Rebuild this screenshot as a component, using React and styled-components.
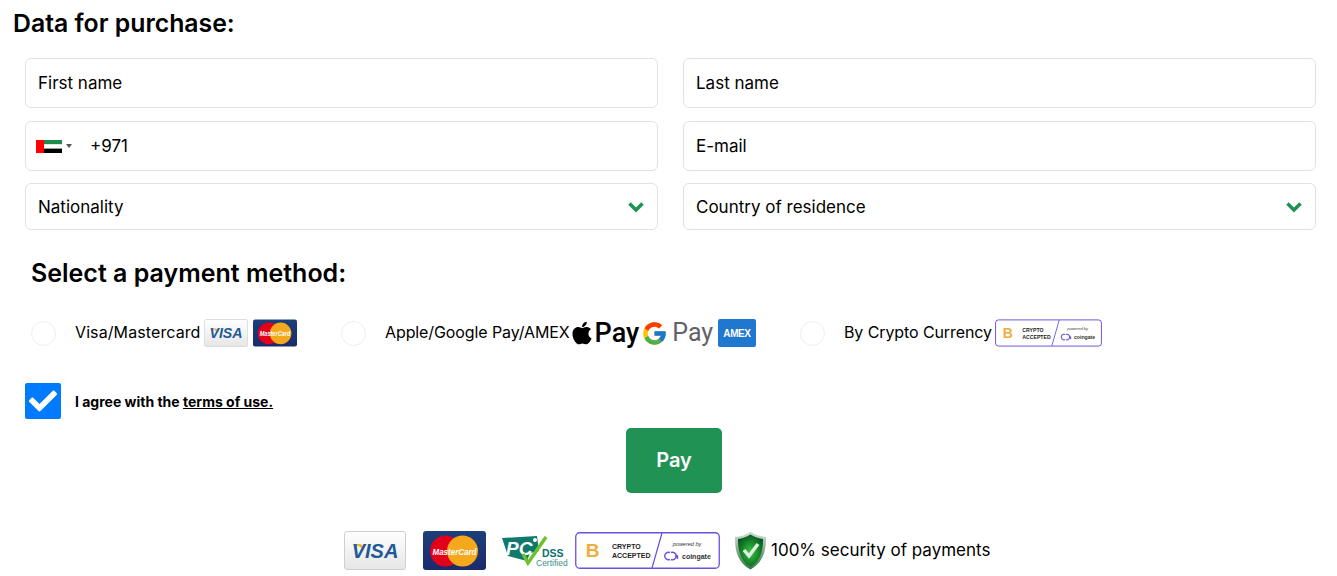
import styled, { createGlobalStyle } from 'styled-components'
import { FaApple, FaCheck } from 'react-icons/fa'
import { FcGoogle } from 'react-icons/fc'

const GlobalStyle = createGlobalStyle`
  html, body {
    margin: 0;
    padding: 0;
    background: #fff;
    color: #000;
    font-family: Inter, "Noto Sans", sans-serif;
  }
`

const Flag = () => (
  <svg width="26" height="13" viewBox="0 0 26 13">
    <rect width="26" height="4.4" fill="#1f8a4c" />
    <rect y="4.4" width="26" height="4.2" fill="#fff" />
    <rect y="8.6" width="26" height="4.4" fill="#000" />
    <rect width="8" height="13" fill="#f00" />
  </svg>
)

const Chevron = () => (
  <svg width="18" height="12" viewBox="0 0 18 12">
    <path d="M2.5 2.5 9 9l6.500-6.500" fill="none" stroke="#1f9254" strokeWidth="3.600" />
  </svg>
)

const VisaCard = ({ width, height }) => (
  <svg width={width} height={height} viewBox="0 0 62 39">
    <defs>
      <linearGradient id={`visa${width}`} x1="0" y1="0" x2="0" y2="1">
        <stop offset="0" stopColor="#fff" />
        <stop offset="1" stopColor="#e6e6e6" />
      </linearGradient>
    </defs>
    <rect x="0.5" y="0.5" width="61" height="38" rx="2.500" fill={`url(#visa${width})`} stroke="#cfcfcf" />
    <path d="M8 13h8c2 0 3 2 4 6-3-3-7-5-12-6z" fill="#f0b030" />
    <text x="31" y="27" textAnchor="middle" fontFamily="Liberation Sans" fontWeight="700" fontStyle="italic" fontSize="20" fill="#1f5a94">VISA</text>
  </svg>
)

const MasterCard = ({ width, height }) => (
  <svg width={width} height={height} viewBox="0 0 63 39">
    <defs>
      <linearGradient id={`mc${width}`} x1="0" y1="0" x2="0" y2="1">
        <stop offset="0" stopColor="#1c4079" />
        <stop offset="1" stopColor="#1b2a6c" />
      </linearGradient>
    </defs>
    <rect width="63" height="39" rx="3" fill={`url(#mc${width})`} />
    <circle cx="22.500" cy="20" r="15.500" fill="#e2001a" />
    <circle cx="39.500" cy="20" r="15.500" fill="#f5a81c" />
    <text x="31.500" y="23.500" textAnchor="middle" fontFamily="Liberation Sans" fontWeight="700" fontStyle="italic" fontSize="9.500" textLength="44" lengthAdjust="spacingAndGlyphs" fill="#fff">MasterCard</text>
  </svg>
)

const AmexCard = () => (
  <svg width="38" height="28" viewBox="0 0 38 28">
    <rect width="38" height="28" rx="2" fill="#1f77d0" />
    <text x="19" y="17.500" textAnchor="middle" fontFamily="Liberation Sans" fontWeight="700" fontSize="10" letterSpacing="-0.400" fill="#fff">AMEX</text>
  </svg>
)

const CryptoBadge = ({ width, height }) => (
  <svg width={width} height={height} viewBox="0 0 145 37">
    <rect x="0.750" y="0.750" width="143.500" height="35.500" rx="4" fill="#fff" stroke="#6a4fe0" strokeWidth="1.300" />
    <path d="M87 1 77 36" stroke="#6a4fe0" strokeWidth="1.200" />
    <text x="17.500" y="25" textAnchor="middle" fontFamily="Liberation Sans" fontWeight="700" fontSize="19" fill="#f0ad3c">B</text>
    <text x="37" y="17" fontFamily="Liberation Sans" fontWeight="700" fontSize="7" fill="#222">CRYPTO</text>
    <text x="37" y="26" fontFamily="Liberation Sans" fontWeight="700" fontSize="7" fill="#222">ACCEPTED</text>
    <text x="112" y="14" textAnchor="middle" fontFamily="Liberation Sans" fontStyle="italic" fontSize="5.500" fill="#333">powered by</text>
    <path d="M95 20.500a3.800 3.800 0 1 0 0 7M96 27.500a3.800 3.800 0 1 0 0-7M100 24h2.500v3" fill="none" stroke="#6a4fe0" strokeWidth="1.400" />
    <text x="107" y="26.500" fontFamily="Liberation Sans" fontWeight="700" fontSize="7" fill="#333">coingate</text>
  </svg>
)

const PciLogo = () => (
  <svg width="70" height="39" viewBox="0 0 70 39">
    <path d="M0 7 35 5l2 15-9 2-3 8L6 25z" fill="#0f7a6c" />
    <text x="4" y="24" fontFamily="Liberation Sans" fontWeight="700" fontStyle="italic" fontSize="19" fill="#fff">PC</text>
    <circle cx="33" cy="9" r="2" fill="#fff" />
    <path d="M21 23l5 9L44 6" fill="none" stroke="#6cc12c" strokeWidth="3.500" />
    <text x="40" y="26" fontFamily="Liberation Sans" fontWeight="700" fontSize="10.500" fill="#0f6f6a">DSS</text>
    <text x="34" y="35" fontFamily="Liberation Sans" fontSize="8.500" fill="#3a8f8a">Certified</text>
  </svg>
)

const Shield = () => (
  <svg width="33" height="39" viewBox="0 0 33 39">
    <defs>
      <linearGradient id="shieldRim" x1="0" y1="0" x2="0" y2="1">
        <stop offset="0" stopColor="#d5dfd6" />
        <stop offset="1" stopColor="#2f7a41" />
      </linearGradient>
      <radialGradient id="shieldFill" cx="0.500" cy="0.550" r="0.600">
        <stop offset="0" stopColor="#35c53f" />
        <stop offset="1" stopColor="#04521c" />
      </radialGradient>
    </defs>
    <path d="M16.500 0.500C21 4 26 5.500 32 6c0 13-2 25-15.500 32.500C3 31 1 19 1 6 7 5.500 12 4 16.500 0.500z" fill="url(#shieldRim)" />
    <path d="M16.500 3.500C20.500 6 25 7.500 29 8c0 11-2 22-12.500 27.500C6 30 4 19 4 8c4-.5 8.500-2 12.500-4.500z" fill="url(#shieldFill)" />
    <path d="M10 19l5 6 9-12" fill="none" stroke="#dfeee0" strokeWidth="3.500" />
  </svg>
)

const App = () => (
  <Page>
    <GlobalStyle />
    <Title>Data for purchase:</Title>
    <FieldRow $gap={13}>
      <Field>First name</Field>
      <Field>Last name</Field>
    </FieldRow>
    <FieldRow $gap={12}>
      <Field>
        <FlagPicker>
          <Flag />
          <Caret />
        </FlagPicker>
        +971
      </Field>
      <Field>E-mail</Field>
    </FieldRow>
    <FieldRow $gap={0}>
      <SelectField>
        Nationality
        <Chevron />
      </SelectField>
      <SelectField>
        Country of residence
        <Chevron />
      </SelectField>
    </FieldRow>

    <SubTitle>Select a payment method:</SubTitle>
    <Methods>
      <Method $width={310}>
        <Radio />
        <MethodLabel $spacing={0.1}>Visa/Mastercard</MethodLabel>
        <Logos $left={3}>
          <VisaCard width={44} height={28} />
          <MasterCard width={44} height={28} />
        </Logos>
      </Method>
      <Method $width={459}>
        <Radio />
        <MethodLabel $spacing={-0.1}>Apple/Google Pay/AMEX</MethodLabel>
        <Logos $left={2}>
          <PayMark $gap={3}>
            <FaApple size={26} color="#000" />
            <PayText>Pay</PayText>
          </PayMark>
          <PayMark $gap={7}>
            <FcGoogle size={27} />
            <PayText $grey>Pay</PayText>
          </PayMark>
          <AmexCard />
        </Logos>
      </Method>
      <Method>
        <Radio />
        <MethodLabel $spacing={-0.1}>By Crypto Currency</MethodLabel>
        <Logos $left={3}>
          <CryptoBadge width={107} height={28} />
        </Logos>
      </Method>
    </Methods>

    <Agree>
      <CheckBox>
        <FaCheck size={28} color="#fff" />
      </CheckBox>
      <AgreeText>
        I agree with the <TermsLink>terms of use.</TermsLink>
      </AgreeText>
    </Agree>

    <PayRow>
      <PayButton>Pay</PayButton>
    </PayRow>

    <Footer>
      <VisaCard width={62} height={39} />
      <FooterLogo $left={17}>
        <MasterCard width={63} height={39} />
      </FooterLogo>
      <FooterLogo $left={16}>
        <PciLogo />
      </FooterLogo>
      <FooterLogo $left={3}>
        <CryptoBadge width={145} height={37} />
      </FooterLogo>
      <Security>
        <Shield />
        <SecurityText>100% security of payments</SecurityText>
      </Security>
    </Footer>
  </Page>
)

const Page = styled.div`
  width: 1337px;
  height: 576px;
  overflow: hidden;
`

const Title = styled.h2`
  margin: 0;
  padding: 8px 0 0 13px;
  height: 58px;
  box-sizing: border-box;
  font-size: 24.8px;
  line-height: 30px;
  font-weight: 600;
`

const FieldRow = styled.div`
  display: grid;
  grid-template-columns: 633px 633px;
  column-gap: 25px;
  padding-left: 25px;
  margin-bottom: ${props => props.$gap}px;
`

const Field = styled.div`
  display: flex;
  align-items: center;
  box-sizing: border-box;
  height: 50px;
  padding: 0 12px;
  border: 1px solid #e2e2e2;
  border-radius: 6px;
  font-size: 17px;
`

const SelectField = styled(Field)`
  height: 47px;
  justify-content: space-between;
`

const FlagPicker = styled.div`
  display: flex;
  align-items: center;
  width: 54px;
  margin-left: -2px;
`

const Caret = styled.span`
  margin-left: 4px;
  border-left: 3px solid transparent;
  border-right: 3px solid transparent;
  border-top: 4px solid #555;
`

const SubTitle = styled.h3`
  margin: 0;
  padding: 28px 0 0 31px;
  height: 71px;
  box-sizing: border-box;
  font-size: 25px;
  line-height: 30px;
  font-weight: 600;
`

const Methods = styled.div`
  display: flex;
  align-items: center;
  height: 30px;
  padding-left: 31px;
  margin-top: 17px;
`

const Method = styled.div`
  display: flex;
  align-items: center;
  width: ${props => (props.$width ? `${props.$width}px` : 'auto')};
`

const Radio = styled.span`
  box-sizing: border-box;
  flex: none;
  width: 25px;
  height: 25px;
  margin-right: 19px;
  border: 1px solid #eee;
  border-radius: 50%;
`

const MethodLabel = styled.span`
  margin-bottom: 2px;
  font-size: 16px;
  letter-spacing: ${props => props.$spacing}px;
  white-space: nowrap;
`

const Logos = styled.div`
  display: flex;
  align-items: center;
  gap: 5px;
  margin-left: ${props => props.$left}px;
`

const PayMark = styled.div`
  display: flex;
  align-items: center;
  gap: ${props => props.$gap}px;

  svg {
    margin: 0 -3px;
  }
`

const PayText = styled.span`
  font-family: Roboto, "Liberation Sans", sans-serif;
  font-size: ${props => (props.$grey ? '25px' : '27px')};
  font-weight: ${props => (props.$grey ? 400 : 500)};
  line-height: 28px;
  color: ${props => (props.$grey ? '#5f6368' : '#000')};
`

const Agree = styled.div`
  display: flex;
  align-items: center;
  margin: 35px 0 0 25px;
`

const CheckBox = styled.div`
  display: flex;
  align-items: center;
  justify-content: center;
  width: 36px;
  height: 36px;
  margin-right: 14px;
  border-radius: 2px;
  background: #007bff;
`

const AgreeText = styled.span`
  font-size: 14px;
  font-weight: 700;
`

const TermsLink = styled.span`
  text-decoration: underline;
`

const PayRow = styled.div`
  display: flex;
  padding-left: 626px;
  margin-top: 9px;
`

const PayButton = styled.button`
  width: 96px;
  height: 65px;
  padding: 0 0 2px;
  border: 0;
  border-radius: 5px;
  background: #1f9254;
  color: #fff;
  font-family: inherit;
  font-size: 20px;
  font-weight: 600;
`

const Footer = styled.div`
  display: flex;
  align-items: center;
  padding-left: 344px;
  margin-top: 38px;
`

const FooterLogo = styled.div`
  display: flex;
  margin-left: ${props => props.$left}px;
`

const Security = styled.div`
  display: flex;
  align-items: center;
  gap: 4px;
  margin-left: 14px;
  font-size: 17px;
  white-space: nowrap;
`

const SecurityText = styled.span`
  margin-bottom: 2px;
`

export default App
